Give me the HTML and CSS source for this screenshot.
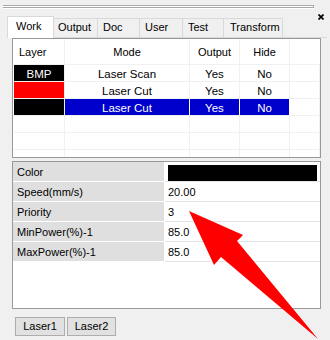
FILE: index.html
```html
<!DOCTYPE html>
<html>
<head>
<meta charset="utf-8">
<link rel="stylesheet" href="styles.css">
</head>
<body>
<div class="titlebar">
  <div class="grip"></div>
  <svg class="close" width="6" height="6" viewBox="0 0 6 6"><path d="M0.5 0.5L5.5 5.5M5.5 0.5L0.5 5.5" stroke="#000" stroke-width="1.7"/></svg>
</div>
<div class="tabs">
  <div class="tab tab-active">Work</div>
  <div class="tab tab-output">Output</div>
  <div class="tab tab-doc">Doc</div>
  <div class="tab tab-user">User</div>
  <div class="tab tab-test">Test</div>
  <div class="tab tab-transform">Transform</div>
</div>
<div class="page">
  <div class="list">
    <div class="hd hd-layer">Layer</div>
    <div class="hd">Mode</div>
    <div class="hd">Output</div>
    <div class="hd">Hide</div>
    <div class="hd hd-last"></div>

    <div class="c"><div class="swatch swatch-black">BMP</div></div>
    <div class="c">Laser Scan</div>
    <div class="c">Yes</div>
    <div class="c">No</div>
    <div class="c c-last"></div>

    <div class="c"><div class="swatch swatch-red"></div></div>
    <div class="c">Laser Cut</div>
    <div class="c">Yes</div>
    <div class="c">No</div>
    <div class="c c-last"></div>

    <div class="c"><div class="swatch swatch-black"></div></div>
    <div class="c sel">Laser Cut</div>
    <div class="c sel">Yes</div>
    <div class="c sel">No</div>
    <div class="c c-last"></div>

    <div class="c"></div><div class="c"></div><div class="c"></div><div class="c"></div><div class="c c-last"></div>
    <div class="c"></div><div class="c"></div><div class="c"></div><div class="c"></div><div class="c c-last"></div>
    <div class="c"></div><div class="c"></div><div class="c"></div><div class="c"></div><div class="c c-last"></div>
  </div>

  <div class="props">
    <div class="pk">Color</div><div class="pv"><div class="colorbox"></div></div>
    <div class="pk">Speed(mm/s)</div><div class="pv">20.00</div>
    <div class="pk">Priority</div><div class="pv">3</div>
    <div class="pk">MinPower(%)-1</div><div class="pv">85.0</div>
    <div class="pk">MaxPower(%)-1</div><div class="pv">85.0</div>
  </div>

  <div class="buttons">
    <div class="btn btn-1">Laser1</div>
    <div class="btn btn-2">Laser2</div>
  </div>
</div>
<svg class="arrow" width="330" height="340" viewBox="0 0 330 340"><polygon points="189,211 214,265 221,257 318,339 237,241 243,235" fill="#ff0000"/></svg>
</body>
</html>
```
FILE: styles.css
```css
html, body {
  margin: 0;
  padding: 0;
}
body {
  width: 330px;
  height: 340px;
  overflow: hidden;
  position: relative;
  background: #f0f0f0;
  font-family: "Liberation Sans", Arial, sans-serif;
  font-size: 11px;
  color: #000;
}
.titlebar {
  display: flex;
  align-items: flex-start;
  height: 16px;
  box-sizing: border-box;
  padding: 5px 0 0 3px;
}
.grip {
  width: 310px;
  height: 1px;
  box-sizing: content-box;
  border-top: 1px solid #a8a8a8;
  border-bottom: 1px solid #a8a8a8;
  border-right: 1px solid #a8a8a8;
  background: #fff;
  box-shadow: 0 1px 0 #fff;
}
.close {
  display: block;
  margin-left: 4px;
  margin-top: 9px;
}
.tabs {
  display: flex;
  align-items: flex-end;
  height: 21px;
  padding-left: 7px;
}
.tab {
  box-sizing: border-box;
  height: 19px;
  border-top: 1px solid #d9d9d9;
  border-left: 1px solid #d9d9d9;
  padding: 1px 0 0 5px;
  line-height: 14px;
  white-space: nowrap;
}
.tab-active {
  position: relative;
  z-index: 1;
  width: 47px;
  height: 22px;
  margin-bottom: -1px;
  margin-right: -1px;
  padding: 2px 0 0 8px;
  background: #fff;
  border-right: 1px solid #d9d9d9;
}
.tab-output { width: 44px; padding-left: 4px; }
.tab-doc { width: 42px; }
.tab-user { width: 43px; }
.tab-test { width: 41px; }
.tab-transform { width: 60px; padding-left: 6px; border-right: 1px solid #d9d9d9; }

.page {
  margin: 0 3px 0 7px;
  border-top: 1px solid #d9d9d9;
  padding: 0 6px 0 5px;
}
.list {
  box-sizing: border-box;
  height: 120px;
  border: 1px solid #999;
  background: #fff;
  padding-left: 1px;
  overflow: hidden;
  display: grid;
  grid-template-columns: 51px 125px 50px 50px 1fr;
  grid-auto-rows: 17px;
  grid-template-rows: 26px;
}
.hd {
  box-sizing: border-box;
  border-right: 1px solid #f0f0f0;
  border-bottom: 1px solid #f0f0f0;
  text-align: center;
  line-height: 27px;
  font-size: 11px;
}
.hd-layer {
  text-align: left;
  padding-left: 5px;
}
.hd-last, .c-last {
  border-right: none;
}
.c {
  box-sizing: border-box;
  border-right: 1px solid #f0f0f0;
  border-bottom: 1px solid #f0f0f0;
  text-align: center;
  line-height: 18px;
  font-size: 11.5px;
  white-space: nowrap;
}
.sel {
  background: #0000cc;
  color: #fff;
  border-right-color: #fff;
}
.swatch {
  height: 16px;
  color: #fff;
  line-height: 18px;
}
.swatch-black { background: #000; }
.swatch-red { background: #ff0000; }

.props {
  box-sizing: border-box;
  margin-top: 3px;
  height: 148px;
  border: 1px solid #999;
  background: #fff;
  display: grid;
  grid-template-columns: 151px 1fr;
  grid-auto-rows: 20px;
  column-gap: 1px;
  align-content: start;
}
.pk, .pv {
  box-sizing: border-box;
  padding: 2px 0 0 4px;
  line-height: 17px;
  white-space: nowrap;
}
.pk {
  background: #dfdfdf;
  border-bottom: 1px solid #fff;
}
.pv {
  padding-left: 3px;
  border-bottom: 1px solid #e3e3e3;
}
.colorbox {
  width: 149px;
  height: 16px;
  margin-top: 1px;
  background: #000;
}

.buttons {
  display: flex;
  gap: 2px;
  margin-top: 8px;
  padding-left: 3px;
}
.btn {
  box-sizing: border-box;
  height: 19px;
  border: 1px solid #adadad;
  background: #e1e1e1;
  text-align: center;
  line-height: 17px;
}
.btn-1 { width: 50px; }
.btn-2 { width: 49px; }

.arrow {
  position: absolute;
  left: 0;
  top: 0;
  pointer-events: none;
}
```
